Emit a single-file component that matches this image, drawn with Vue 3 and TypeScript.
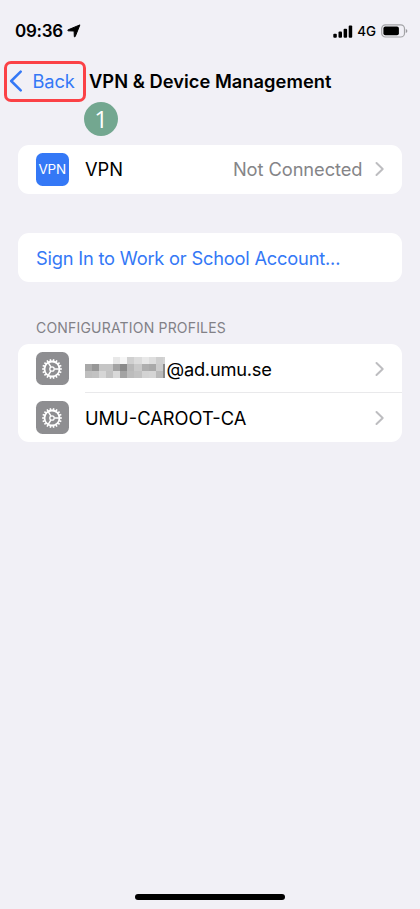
<script setup lang="ts">
interface Profile {
  name: string
  redacted: boolean
}

const profiles: Profile[] = [
  { name: '@ad.umu.se', redacted: true },
  { name: 'UMU-CAROOT-CA', redacted: false },
]

// Grey levels of the mosaic over the account name; null leaves the cell empty.
const mosaic: (number | null)[][] = [
  [null, null, null, null, 232, 246, 208, 220, 232, 222, 207],
  [169, 151, 197, 197, 163, 138, 184, 201, 174, 169, 204],
  [191, 194, 214, 195, 217, 163, 188, 194, 211, 213, 186],
]
const columns: number[] = [0, 7, 14, 21, 28, 35, 42, 49, 57, 64, 71, 78]

interface Cell {
  x: number
  y: number
  width: number
  fill: string
}

const cells: Cell[] = mosaic.flatMap((row, r) =>
  row.flatMap((level, c) =>
    level === null
      ? []
      : [{ x: columns[c], y: r * 7, width: columns[c + 1] - columns[c], fill: `rgb(${level},${level},${level})` }],
  ),
)

const teeth: number[] = Array.from({ length: 18 }, (_, i) => i * 20)
</script>

<template>
  <div class="screen">
    <header class="status">
      <div class="clock">
        <span class="time">09:36</span>
        <svg class="location" width="14" height="14" viewBox="0 0 14 14">
          <path d="M12.9 0.9 L8.2 12.6 Q7.6 13.5 7.3 12.4 L7.1 7 L1.3 6.8 Q0.2 6.4 1.2 5.8 Z" fill="#000" stroke="#000" stroke-width="1" stroke-linejoin="round" />
        </svg>
      </div>
      <div class="signals">
        <svg width="20" height="13" viewBox="0 0 20 13">
          <rect x="0.3" y="8.7" width="3.5" height="4" rx="1" />
          <rect x="5.5" y="6.6" width="3.5" height="6.1" rx="1" />
          <rect x="10.6" y="3.7" width="3.5" height="9" rx="1" />
          <rect x="15.7" y="0.5" width="3.5" height="12.2" rx="1" />
        </svg>
        <span class="network">4G</span>
        <svg class="battery" width="27" height="14" viewBox="0 0 27 14">
          <rect x=".7" y=".8" width="22.8" height="12.2" rx="3.8" fill="none" stroke="#a3a3a6" stroke-width="1.2" />
          <rect x="2.4" y="2.6" width="15.5" height="8.6" rx="1.9" />
          <path d="M24.8 5 Q26.4 5.5 26.4 7 T24.8 9 Z" fill="#9a9a9e" />
        </svg>
      </div>
    </header>

    <nav class="nav">
      <div class="back">
        <svg width="14" height="22" viewBox="0 0 14 22">
          <path d="M11.7 1.6 L2.2 11 L11.7 20.4" fill="none" stroke="#3478f6" stroke-width="2.5" stroke-linecap="round" stroke-linejoin="round" />
        </svg>
        <span class="back-label">Back</span>
        <span class="step">1</span>
      </div>
      <h1 class="title">VPN &amp; Device Management</h1>
    </nav>

    <main class="content">
      <section class="card">
        <div class="row">
          <span class="tile vpn"><span class="vpn-text">VPN</span></span>
          <div class="body">
            <span class="label">VPN</span>
            <span class="value">Not Connected</span>
            <svg class="chevron" width="10" height="16" viewBox="0 0 10 16">
              <path d="M1.5 2 L7.7 8 L1.5 14" />
            </svg>
          </div>
        </div>
      </section>

      <section class="card sign-in">
        <span class="link">Sign In to Work or School Account...</span>
      </section>

      <h2 class="heading">CONFIGURATION PROFILES</h2>
      <section class="card profiles">
        <div v-for="profile in profiles" :key="profile.name" class="row">
          <span class="tile gear">
            <svg width="22" height="22" viewBox="-11 -11 22 22">
              <g fill="none" stroke="#fff">
                <circle r="7.5" stroke-width="1.8" />
                <circle r="2.2" stroke-width="1.3" />
                <path d="M2.4 0 H7 M-1.2 -2.1 L-3.6 -6.2 M-1.2 2.1 L-3.6 6.2" stroke-width="1.5" />
                <path v-for="angle in teeth" :key="angle" d="M8 0 H9.9" stroke-width="1.6" :transform="`rotate(${angle})`" />
              </g>
            </svg>
          </span>
          <div class="body">
            <svg v-if="profile.redacted" class="mosaic" width="81" height="21" viewBox="0 0 81 21" shape-rendering="crispEdges">
              <rect v-for="(cell, i) in cells" :key="i" :x="cell.x" :y="cell.y" :width="cell.width" height="7" :fill="cell.fill" />
              <rect x="78" y="0" width="2" height="7" fill="#d4d4d4" />
              <rect x="78" y="7" width="2" height="14" fill="#8a8a8a" />
            </svg>
            <span class="label" :class="{ domain: profile.redacted }">{{ profile.name }}</span>
            <svg class="chevron" width="10" height="16" viewBox="0 0 10 16">
              <path d="M1.5 2 L7.7 8 L1.5 14" />
            </svg>
          </div>
        </div>
      </section>
    </main>

    <div class="home"></div>
  </div>
</template>

<style>
body {
  background: #f1f0f6;
}
</style>

<style scoped>
.screen {
  display: flex;
  flex-direction: column;
  height: 909px;
  box-sizing: border-box;
  padding-bottom: 9px;
  background: #f1f0f6;
  color: #000;
  font-family: Inter, "Liberation Sans", sans-serif;
  font-size: 18.3px;
  white-space: nowrap;
}

.status {
  display: flex;
  justify-content: space-between;
  height: 61px;
  box-sizing: border-box;
  padding: 20px 12px 0 15px;
}

.clock,
.signals {
  display: flex;
  align-items: center;
  height: 22px;
}

.time {
  font-size: 17px;
  font-weight: 600;
  letter-spacing: -0.25px;
}

.location {
  margin-left: 4.5px;
}

.network {
  margin-left: 4.5px;
  font-size: 13.4px;
  font-weight: 450;
}

.battery {
  margin-left: 5px;
}

.nav {
  display: flex;
  align-items: center;
  height: 41px;
  padding-left: 4px;
}

.back {
  position: relative;
  display: flex;
  align-items: center;
  width: 82px;
  height: 41px;
  box-sizing: border-box;
  padding: 0 0 2px 2px;
  border: 3px solid #fb4146;
  border-radius: 7px;
}

.back-label {
  margin-left: 9.5px;
  color: #3478f6;
  letter-spacing: -0.1px;
}

.step {
  position: absolute;
  top: 37.5px;
  left: 77px;
  display: flex;
  align-items: center;
  justify-content: center;
  width: 34px;
  height: 34px;
  box-sizing: border-box;
  padding-bottom: 1px;
  border-radius: 50%;
  background: #73a790;
  color: #fff;
  font-family: "Open Sans", sans-serif;
  font-size: 24px;
}

.title {
  margin: 0 0 0 3px;
  padding-bottom: 2px;
  font-size: 18.3px;
  font-weight: 600;
  letter-spacing: 0.03px;
}

.content {
  display: flex;
  flex-direction: column;
  padding: 42.5px 18px 0;
}

.card {
  border-radius: 11px;
  background: #fff;
}

.row {
  display: flex;
  height: 49px;
  align-items: center;
  padding-left: 18px;
}

.tile {
  display: flex;
  flex: none;
  align-items: center;
  justify-content: center;
  width: 32.5px;
  height: 33px;
  border-radius: 6.5px;
}

.vpn {
  background: #3478f6;
}

.vpn-text {
  color: #fff;
  font-size: 13.5px;
  letter-spacing: -0.2px;
}

.gear {
  background: #8e8e91;
}

.body {
  display: flex;
  flex: 1;
  align-items: center;
  height: 100%;
  box-sizing: border-box;
  margin-left: 16.5px;
  padding-right: 17.5px;
}

.value {
  margin-left: auto;
  color: #858588;
  letter-spacing: -0.07px;
}

.chevron {
  flex: none;
  margin-left: auto;
  fill: none;
  stroke: #bdbdc0;
  stroke-width: 2;
  stroke-linecap: round;
  stroke-linejoin: round;
}

.value + .chevron {
  margin-left: 12px;
}

.sign-in {
  display: flex;
  align-items: center;
  height: 49px;
  margin-top: 39.5px;
  padding-left: 18px;
}

.link {
  color: #3478f6;
  letter-spacing: -0.21px;
}

.heading {
  height: 20px;
  margin: 36px 0 6px 18px;
  color: #828187;
  font-size: 14px;
  font-weight: 400;
  line-height: 20px;
  letter-spacing: 0.19px;
}

.profiles .row + .row .body {
  box-shadow: 0 -1px #e9e9eb;
}

.mosaic {
  margin-top: -3px;
}

.domain {
  margin-left: 0.5px;
  letter-spacing: -0.25px;
}

.home {
  width: 150px;
  height: 6px;
  margin: auto auto 0;
  border-radius: 3px;
  background: #000;
}
</style>
